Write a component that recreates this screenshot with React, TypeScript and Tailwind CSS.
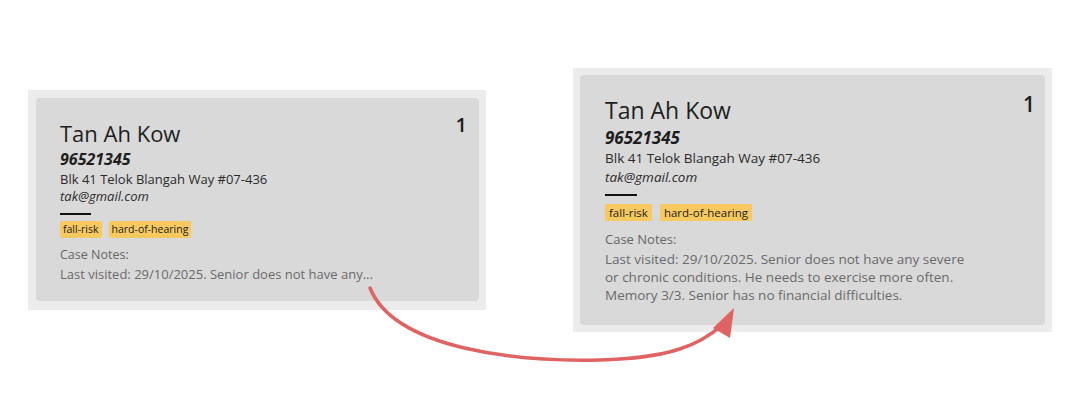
import React from "react";

const font = { fontFamily: '"Open Sans", "Noto Sans", sans-serif' };

function Tags({ big }: { big: boolean }) {
  const cls = big
    ? "bg-[#f7c95f] text-[#222] text-[11.5px] leading-[17px] h-[17px] px-[4px] rounded-[2px]"
    : "bg-[#f7c95f] text-[#222] text-[10.5px] leading-[17px] h-[17px] px-[3px] rounded-[2px]";
  return (
    <div className={big ? "flex gap-[8px] mt-[8px]" : "flex gap-[7px] mt-[6px]"}>
      <span className={cls}>fall-risk</span>
      <span className={cls}>hard-of-hearing</span>
    </div>
  );
}

export default function App() {
  return (
    <div
      className="relative w-[1080px] h-[400px] bg-white flex items-center justify-between px-[28px]"
      style={font}
    >
      {/* Left collapsed card */}
      <div className="bg-[#ececec] w-[458px] pt-[8px] pb-[9px] pl-[8px] pr-[7px]">
        <div className="relative bg-[#d9d9d9] rounded-[4px] h-[203px] pl-[24px] pt-[20px] text-[#1e1e1e]">
          <div className="absolute right-[12px] top-[12px] text-[20px] font-semibold">1</div>
          <div className="text-[22px] leading-[30px] font-medium">Tan Ah Kow</div>
          <div className="text-[16px] leading-[22px] font-bold italic">96521345</div>
          <div className="text-[13px] leading-[18px] text-[#2b2b2b]">Blk 41 Telok Blangah Way #07-436</div>
          <div className="text-[13px] leading-[17px] italic text-[#2b2b2b]">tak@gmail.com</div>
          <div className="w-[31px] h-[2px] bg-[#111] mt-[8px]"></div>
          <Tags big={false} />
          <div className="text-[12.5px] leading-[18px] text-[#666] font-medium mt-[8px]">Case Notes:</div>
          <div className="text-[13px] leading-[18px] text-[#6a6a6a] mt-[1px]">
            Last visited: 29/10/2025. Senior does not have any...
          </div>
        </div>
      </div>

      {/* Right expanded card */}
      <div className="bg-[#ececec] w-[479px] pt-[7px] pb-[7px] pl-[7px] pr-[7px]">
        <div className="relative bg-[#d9d9d9] rounded-[4px] h-[250px] pl-[25px] pt-[20px] text-[#1e1e1e]">
          <div className="absolute right-[10px] top-[14px] text-[21px] font-semibold">1</div>
          <div className="text-[23px] leading-[31px] font-medium">Tan Ah Kow</div>
          <div className="text-[17px] leading-[23px] font-bold italic">96521345</div>
          <div className="text-[13.5px] leading-[19px] text-[#2b2b2b]">Blk 41 Telok Blangah Way #07-436</div>
          <div className="text-[13.5px] leading-[18px] italic text-[#2b2b2b]">tak@gmail.com</div>
          <div className="w-[32px] h-[2px] bg-[#111] mt-[8px]"></div>
          <Tags big={true} />
          <div className="text-[13px] leading-[19px] text-[#666] font-medium mt-[9px]">Case Notes:</div>
          <div className="text-[13.5px] leading-[18px] text-[#6a6a6a] mt-[1px]">
            <div>Last visited: 29/10/2025. Senior does not have any severe</div>
            <div>or chronic conditions. He needs to exercise more often.</div>
            <div>Memory 3/3. Senior has no financial difficulties.</div>
          </div>
        </div>
      </div>

      {/* Arrow */}
      <svg className="absolute left-0 top-0 pointer-events-none" width="1080" height="400" viewBox="0 0 1080 400">
        <path
          d="M370 288 C 395 350, 520 362, 600 360 C 670 358, 700 345, 722 325"
          fill="none"
          stroke="#e06363"
          strokeWidth="3.5"
          strokeLinecap="round"
        />
        <polygon points="734,308 713,328 730,338" fill="#e06363" />
      </svg>
    </div>
  );
}
